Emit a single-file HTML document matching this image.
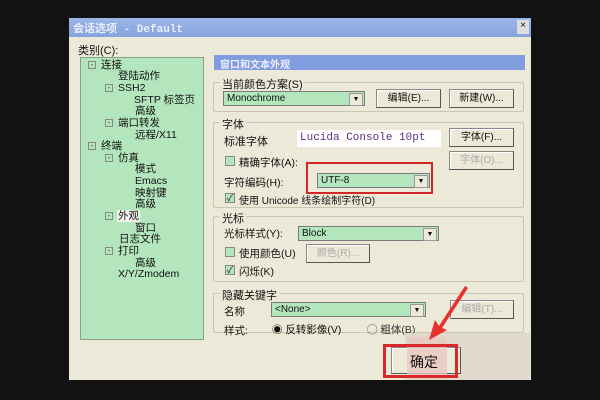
<!DOCTYPE html>
<html><head><meta charset="utf-8"><style>
*{margin:0;padding:0;box-sizing:border-box}
body{width:600px;height:400px;background:#121212;position:relative;overflow:hidden;font-family:"Liberation Sans","Noto Sans CJK SC",sans-serif;font-size:10px;color:#111}
.a{position:absolute;white-space:nowrap}
.dlg{left:69px;top:18px;width:462px;height:362px;background:#ece9d8}
.title{left:69px;top:18px;width:462px;height:19px;background:linear-gradient(#9db6e8,#86a3dc);color:#e8eefc;font-family:"Liberation Mono","Noto Sans CJK SC",monospace;font-weight:bold;font-size:11px;padding:2px 0 0 4px}
.tree{left:80px;top:57px;width:124px;height:283px;background:#b3e6bd;border:1px solid #8aa08a}
.hdr{left:214px;top:55px;width:311px;height:15px;background:#7f9ddf;color:#eef;font-weight:bold;font-size:10px;padding:1px 0 0 6px}
.grp{border:1px solid #c9c6b4;border-radius:2px}
.gl{background:#ece9d8;padding:0 2px;font-size:11px}
.combo{background:#b3e6bd;border:1px solid #7a7a7a;height:15px;font-size:10px;padding:1px 0 0 3px}
.combo:after{content:"▼";position:absolute;right:1px;top:1px;width:12px;height:11px;background:#ece9d8;font-size:7px;text-align:center;line-height:11px;border:1px solid #999}
.btn{border:1px solid #888;border-right-color:#555;border-bottom-color:#555;background:#ece9d8;text-align:center;font-size:10px;height:19px;line-height:17px;box-shadow:inset 1px 1px #fff}
.dis{color:#aaa}
.cb{width:10px;height:10px;border:1px solid #888;background:#b3e6bd;font-size:9px;line-height:8px;text-align:center}
.t{position:absolute;font-size:10.5px;line-height:12px;height:12px;white-space:nowrap}
.m{position:absolute;width:8px;height:8px;border:1px solid #888;font-size:8px;line-height:6px;text-align:center;color:#333}
</style></head><body>
<div class="a dlg"></div>
<div class="a title">会话选项 - Default</div>
<div class="a" style="left:517px;top:20px;width:12px;height:14px;background:#ddd;font-size:10px;text-align:center">×</div>
<div class="a" style="left:78px;top:42px;font-size:11px">类别(C):</div>
<div class="a tree"></div>
<div class="m" style="left:88px;top:61px">-</div><div class="t" style="left:101px;top:59px">连接</div>
<div class="t" style="left:118px;top:70px">登陆动作</div>
<div class="m" style="left:105px;top:84px">-</div><div class="t" style="left:118px;top:82px">SSH2</div>
<div class="t" style="left:134px;top:94px">SFTP 标签页</div>
<div class="t" style="left:135px;top:105px">高级</div>
<div class="m" style="left:105px;top:119px">-</div><div class="t" style="left:118px;top:117px">端口转发</div>
<div class="t" style="left:135px;top:129px">远程/X11</div>
<div class="m" style="left:88px;top:142px">-</div><div class="t" style="left:101px;top:140px">终端</div>
<div class="m" style="left:105px;top:154px">-</div><div class="t" style="left:118px;top:152px">仿真</div>
<div class="t" style="left:135px;top:163px">模式</div>
<div class="t" style="left:135px;top:175px">Emacs</div>
<div class="t" style="left:135px;top:187px">映射键</div>
<div class="t" style="left:135px;top:198px">高级</div>
<div class="m" style="left:105px;top:212px">-</div><div class="t" style="left:117px;top:210px;background:#f4f4ec;padding:0 1px">外观</div>
<div class="t" style="left:135px;top:222px">窗口</div>
<div class="t" style="left:119px;top:233px">日志文件</div>
<div class="m" style="left:105px;top:247px">-</div><div class="t" style="left:118px;top:245px">打印</div>
<div class="t" style="left:135px;top:257px">高级</div>
<div class="t" style="left:118px;top:268px">X/Y/Zmodem</div>
<div class="a hdr">窗口和文本外观</div>
<div class="a grp" style="left:213px;top:82px;width:311px;height:30px"></div>
<div class="a gl" style="left:220px;top:76px">当前颜色方案(S)</div>
<div class="a combo" style="left:223px;top:91px;width:142px">Monochrome</div>
<div class="a btn" style="left:376px;top:89px;width:65px">编辑(E)...</div>
<div class="a btn" style="left:449px;top:89px;width:65px">新建(W)...</div>
<div class="a grp" style="left:213px;top:122px;width:311px;height:86px"></div>
<div class="a gl" style="left:220px;top:116px">字体</div>
<div class="a" style="left:224px;top:133px;font-size:11px">标准字体</div>
<div class="a" style="left:297px;top:130px;width:144px;height:17px;background:#fff;color:#5a2d82;font-family:'Liberation Mono',monospace;font-size:11px;padding:2px 0 0 3px">Lucida Console 10pt</div>
<div class="a btn" style="left:449px;top:128px;width:65px">字体(F)...</div>
<div class="a btn dis" style="left:449px;top:151px;width:65px">字体(O)...</div>
<div class="a cb" style="left:225px;top:156px"></div>
<div class="a" style="left:239px;top:155px;font-size:10.5px">精确字体(A):</div>
<div class="a" style="left:224px;top:175px;font-size:10.5px">字符编码(H):</div>
<div class="a combo" style="left:317px;top:173px;width:113px">UTF-8</div>
<div class="a" style="left:306px;top:162px;width:127px;height:32px;border:2px solid #d42424"></div>
<div class="a cb" style="left:225px;top:193px">✓</div>
<div class="a" style="left:239px;top:192px;font-size:10px">使用 Unicode 线条绘制字符(D)</div>
<div class="a grp" style="left:213px;top:216px;width:311px;height:66px"></div>
<div class="a gl" style="left:220px;top:210px">光标</div>
<div class="a" style="left:224px;top:226px;font-size:10.5px">光标样式(Y):</div>
<div class="a combo" style="left:298px;top:226px;width:141px">Block</div>
<div class="a cb" style="left:225px;top:247px"></div>
<div class="a" style="left:239px;top:246px;font-size:10.5px">使用颜色(U)</div>
<div class="a btn dis" style="left:306px;top:244px;width:64px">颜色(R)...</div>
<div class="a cb" style="left:225px;top:265px">✓</div>
<div class="a" style="left:239px;top:264px;font-size:10.5px">闪烁(K)</div>
<div class="a grp" style="left:213px;top:293px;width:311px;height:40px"></div>
<div class="a gl" style="left:220px;top:287px">隐藏关键字</div>
<div class="a" style="left:224px;top:304px;font-size:10.5px">名称</div>
<div class="a combo" style="left:271px;top:302px;width:155px">&lt;None&gt;</div>
<div class="a btn dis" style="left:450px;top:300px;width:64px">编辑(T)...</div>
<div class="a" style="left:224px;top:323px;font-size:10.5px">样式:</div>
<div class="a" style="left:272px;top:322px;font-size:10.5px">◉ 反转影像(V)</div>
<div class="a" style="left:367px;top:322px;font-size:10.5px;color:#333">◯ 粗体(B)</div>
<div class="a" style="left:405px;top:333px;width:125px;height:47px;background:#ddd6cc;opacity:.8"></div>
<div class="a btn" style="left:391px;top:347px;width:70px;height:27px"></div>
<div class="a" style="left:407px;top:337px;width:40px;height:42px;background:#e8c8c0;opacity:.8"></div>
<div class="a" style="left:410px;top:352px;font-size:14px">确定</div>
<div class="a" style="left:383px;top:344px;width:75px;height:34px;border:3px solid #d82828"></div>
<svg class="a" style="left:425px;top:282px" width="45" height="60"><path d="M40 4 L14 44 L10 38 L4 58 L22 48 L17 46 L43 6Z" fill="#e83030"/></svg>
</body></html>
